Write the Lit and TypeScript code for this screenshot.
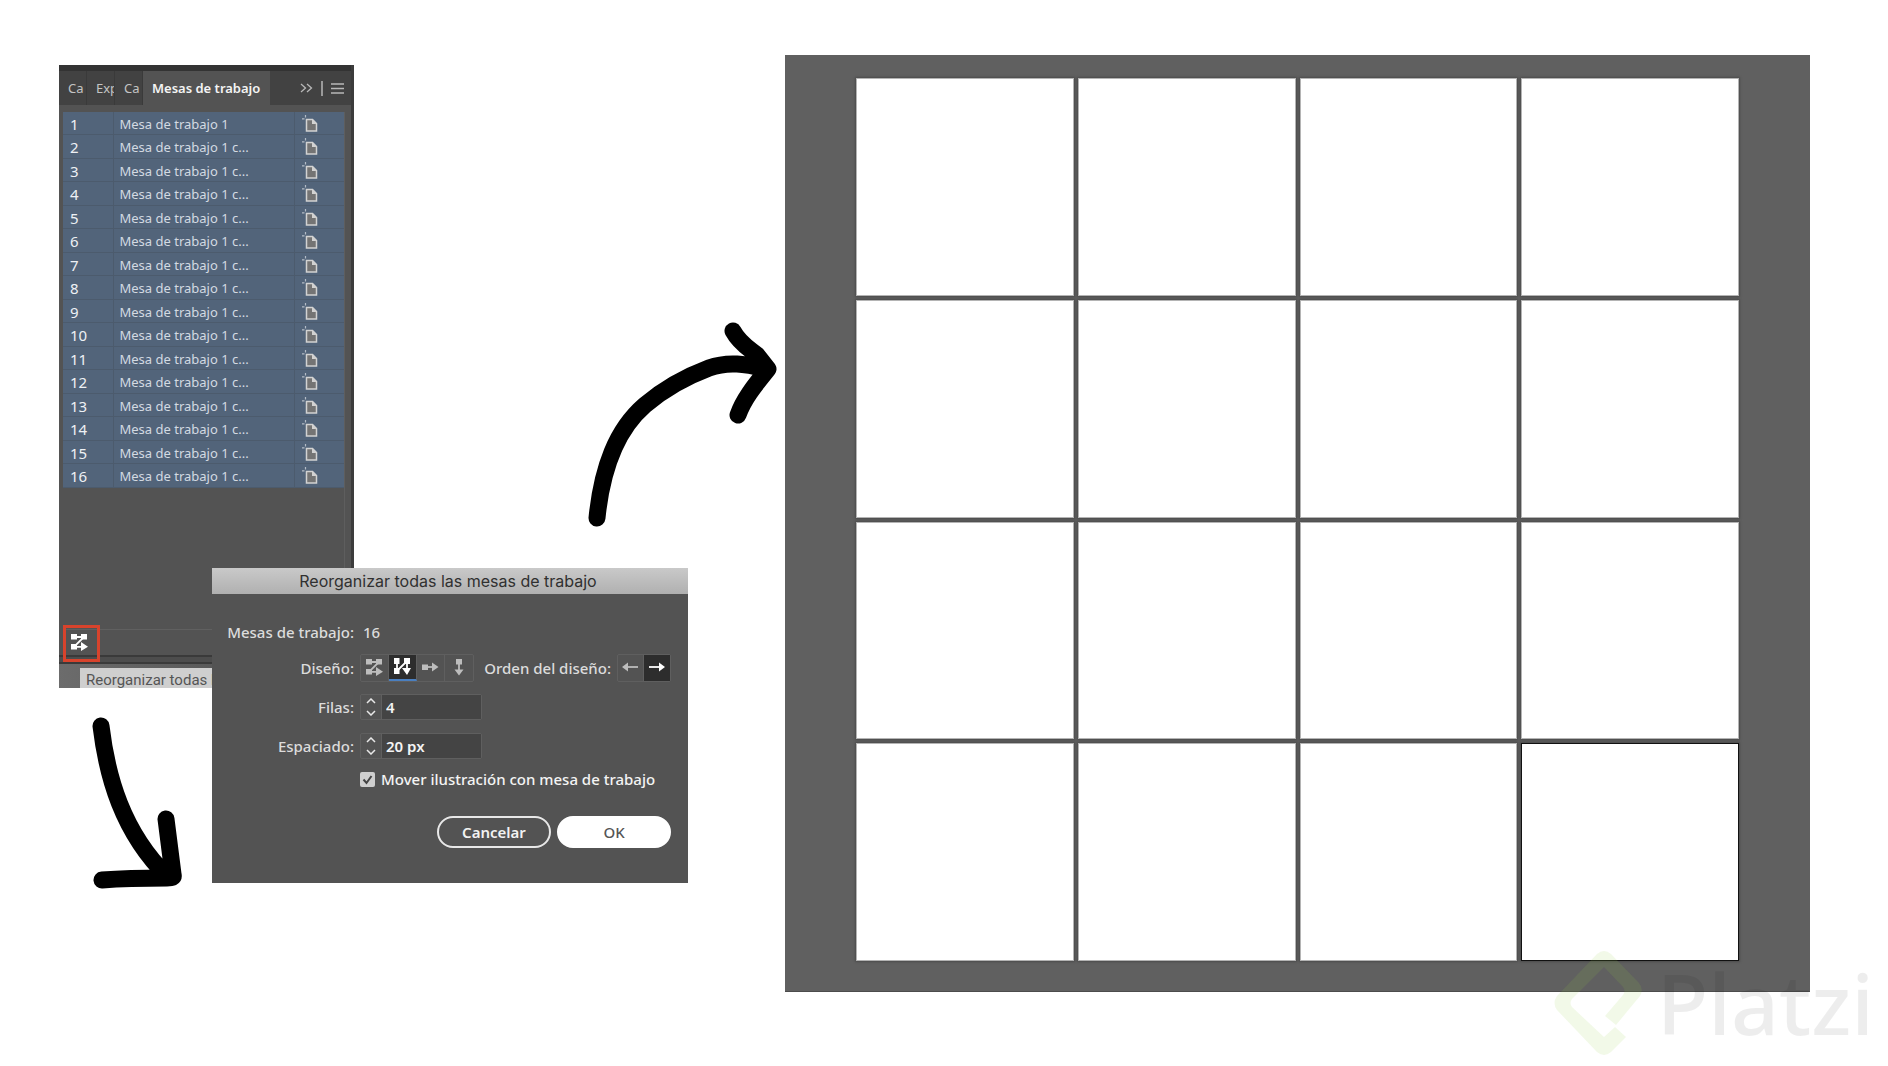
import { LitElement, html, css, svg } from "lit";
import { customElement, state } from "lit/decorators.js";
import { classMap } from "lit/directives/class-map.js";

const boards = Array.from({ length: 16 }, (_, i) => ({
  id: i + 1,
  name: i === 0 ? "Mesa de trabajo 1" : "Mesa de trabajo 1 c...",
}));

/* Layout glyphs, drawn in a 17 x 17 box */
const gridByRow = svg`
  <path d="M3 3h10L3 12.800h9" fill="none" stroke="currentColor" stroke-width="1.800"></path>
  <path d="M0 0h6v5.500H0zM10 0h6v5.500h-6zM0 10h6v5.500H0zM10 8l7 4.800-7 4.200z" fill="currentColor"></path>`;
const gridByColumn = svg`
  <path d="M3 3v10L13 3v9" fill="none" stroke="currentColor" stroke-width="1.800"></path>
  <path d="M0 0h5.500v6H0zM10 0h6v6h-6zM0 10h5.500v6H0zM8 10h9l-4 7z" fill="currentColor"></path>`;
const singleRow = svg`
  <path d="M3 8h9" stroke="currentColor" stroke-width="1.800"></path>
  <path d="M0 5.500h6v5.500H0zM10 3.500l6.500 4.500-6.500 4.500z" fill="currentColor"></path>`;
const singleColumn = svg`
  <path d="M8 3v9" stroke="currentColor" stroke-width="1.800"></path>
  <path d="M5 0h6v5.500H5zM3.500 10.500h9L8 16.500z" fill="currentColor"></path>`;
const arrowLeft = svg`
  <path d="M4 8h12" stroke="currentColor" stroke-width="1.800"></path>
  <path d="M6 3.500v9L0 8z" fill="currentColor"></path>`;
const arrowRight = svg`
  <path d="M0 8h12" stroke="currentColor" stroke-width="1.800"></path>
  <path d="M10 3.500v9L16 8z" fill="currentColor"></path>`;

const icon = (content: unknown) =>
  html`<svg class="icon" viewBox="0 0 17 17" width="17" height="17" aria-hidden="true">${content}</svg>`;

@customElement("artboards-panel")
class ArtboardsPanel extends LitElement {
  static styles = css`
    :host { display: block; background: #535353; color: #e2e2e2; font: 13px/16px "Noto Sans", sans-serif; border-right: 3px solid #3c3c3c; }
    * { box-sizing: border-box; }
    button { font: inherit; color: inherit; background: none; border: 0; padding: 0; margin: 0; }
    .tabs { display: flex; height: 40px; background: #424242; border-top: 6px solid #333; }
    .tab { width: 28px; padding-left: 9px; overflow: hidden; text-align: left; border-right: 1px solid #3a3a3a; color: #c4c4c4; }
    .tab.current { width: 127px; background: #535353; color: #f4f4f4; font-weight: 600; border: 0; white-space: nowrap; }
    .tools { flex: 1; display: flex; align-items: center; justify-content: flex-end; gap: 8px; padding-right: 7px; color: #b8b8b8; }
    .tools button { display: flex; }
    .list { margin: 7px 6px 0 4px; border-right: 1px solid #5e5e5e; min-height: 517px; }
    table { width: 100%; height: 376px; border-collapse: collapse; background: #52647a; table-layout: fixed; }
    td { padding: 1px 0 0; border-bottom: 1px solid #4c5b6d; color: #d3dae2; white-space: nowrap; }
    td + td { border-left: 1px solid #4c5b6d; padding-left: 6px; }
    .num { width: 50px; padding-left: 7px; font-size: 15px; color: #eef1f5; }
    .type { width: 50px; }
    td svg { display: block; }
    .foot { display: flex; height: 26px; margin: 0 6px 0 4px; border-top: 1px solid #606060; border-right: 1px solid #5e5e5e; }
    .rearrange { display: flex; align-items: center; justify-content: center; width: 37px; height: 37px; margin-top: -5px; border: 3px solid #d8432c; color: #fff; padding: 0 4px 2px 0; z-index: 1; }
    .grip { height: 9px; border: solid #3a3a3a; border-width: 2px 0; background: #4d4d4d; }
    .under { display: flex; height: 24px; background: linear-gradient(90deg, #6c6c6c, #484848); align-items: flex-end; }
    .tip { flex: 1; margin-left: 21px; padding-left: 6px; background: #cfcfcf; color: #555; font: 15px/24px Roboto, sans-serif; white-space: nowrap; overflow: hidden; height: 20px; }
  `;
  render() {
    return html`
      <div class="tabs">
        <button class="tab">Ca</button>
        <button class="tab">Exp</button>
        <button class="tab">Ca</button>
        <button class="tab current">Mesas de trabajo</button>
        <div class="tools">
          <button aria-label="Expandir">
            <svg width="13" height="10" viewBox="0 0 13 10" fill="none" stroke="currentColor" stroke-width="1.300"><path d="M1 1l4.500 4L1 9M7 1l4.500 4L7 9"></path></svg>
          </button>
          <svg width="2" height="15"><path d="M1 0v15" stroke="currentColor" stroke-width="1.500"></path></svg>
          <button aria-label="Menú">
            <svg width="13" height="11" viewBox="0 0 13 11" stroke="currentColor" stroke-width="1.400"><path d="M0 1h13M0 5.500h13M0 10h13"></path></svg>
          </button>
        </div>
      </div>
      <div class="list">
        <table>
          <tbody>
            ${boards.map(
              (b) => html`<tr>
                <td class="num">${b.id}</td>
                <td>${b.name}</td>
                <td class="type">
                  <svg width="20" height="18" viewBox="0 0 20 18" fill="none">
                    <path d="M5.500 4.500h6l4 4V16h-10z" fill="#747474" stroke="#d2d2d2" stroke-width="1.500"></path>
                    <path d="M11 4v5h4.500z" fill="#d2d2d2"></path>
                    <path d="M4.500 0v2.500M1 3.800h2.500" stroke="#b4bcc6" stroke-width="1.200"></path>
                  </svg>
                </td>
              </tr>`
            )}
          </tbody>
        </table>
      </div>
      <div class="foot"><button class="rearrange" aria-label="Reorganizar todas">${icon(gridByRow)}</button></div>
      <div class="grip"></div>
      <div class="under"><div class="tip">Reorganizar todas las mesas</div></div>
    `;
  }
}

@customElement("rearrange-dialog")
class RearrangeDialog extends LitElement {
  @state() layout = 1;
  @state() order = 1;
  @state() rows = 4;
  @state() spacing = 20;

  static styles = css`
    :host { display: block; background: #535353; color: #dcdcdc; font: 500 15px/20px "Noto Sans", sans-serif; }
    * { box-sizing: border-box; }
    button, input { font: inherit; color: inherit; margin: 0; }
    h1 { margin: 0; height: 26px; background: linear-gradient(#c9c9c9, #b0b0b0); color: #303030; font: 400 16px/26px Inter, sans-serif; text-align: center; padding-right: 4px; }
    form { padding: 22px 17px 35px 10px; display: flex; flex-direction: column; }
    .row { display: flex; align-items: center; gap: 6px; height: 39px; }
    .row.short { height: 32px; }
    .label { width: 132px; text-align: right; white-space: nowrap; }
    .value { padding-left: 3px; }
    .group { display: flex; border: 1px solid #5f5f5f; border-radius: 2px; height: 28px; }
    .group button { width: 28px; padding: 0; border: 0; border-right: 1px solid #5f5f5f; background: none; display: flex; align-items: center; justify-content: center; color: #bdbdbd; }
    .group button:last-child { border-right: 0; }
    .group button.on { background: #2d2d2d; color: #fff; }
    .group.layouts button.on { border-bottom: 2px solid #4a7fc0; }
    .orderlabel { margin: 0 0 0 auto; white-space: nowrap; }
    .order button { width: 26px; }
    .stepper { display: flex; border: 1px solid #5f5f5f; border-radius: 2px; height: 26px; width: 122px; }
    .arrows { display: flex; flex-direction: column; width: 21px; border-right: 1px solid #5f5f5f; }
    .arrows button { flex: 1; border: 0; padding: 0; background: none; display: flex; align-items: center; justify-content: center; color: #e8e8e8; }
    .stepper input { flex: 1; min-width: 0; border: 0; background: #444; color: #f4f4f4; font-weight: 600; padding: 0 4px; }
    .check { display: flex; align-items: center; gap: 6px; margin-left: 138px; height: 28px; color: #f4f4f4; white-space: nowrap; }
    .check input { appearance: none; width: 15px; height: 15px; border-radius: 2px; background: #cfcfcf url('data:image/svg+xml,<svg xmlns="http://www.w3.org/2000/svg" viewBox="0 0 15 15"><path d="M3.500 7.500l3 3.500 5-7" fill="none" stroke="%23444" stroke-width="2"/></svg>'); }
    .actions { display: flex; justify-content: flex-end; gap: 6px; margin-top: 23px; }
    .actions button { width: 114px; height: 32px; border-radius: 16px; border: 2px solid #e8e8e8; background: none; color: #f2f2f2; font-weight: 600; padding: 0; }
    .actions button.ok { background: #fff; border-color: #fff; color: #555; font-weight: 500; }
  `;

  private stepper(id: string, text: string, label: string, step: (d: number) => void) {
    const up = svg`<path d="M1 5l4-4 4 4"></path>`;
    const down = svg`<path d="M1 1l4 4 4-4"></path>`;
    const chevron = (p: unknown) =>
      html`<svg width="10" height="6" viewBox="0 0 10 6" fill="none" stroke="currentColor" stroke-width="1.500">${p}</svg>`;
    return html`
      <label class="label" for=${id}>${label}</label>
      <div class="stepper">
        <div class="arrows">
          <button type="button" aria-label="Aumentar" @click=${() => step(1)}>${chevron(up)}</button>
          <button type="button" aria-label="Reducir" @click=${() => step(-1)}>${chevron(down)}</button>
        </div>
        <input id=${id} type="text" .value=${text} />
      </div>`;
  }

  render() {
    const layouts = [
      { name: "Cuadrícula por fila", glyph: gridByRow },
      { name: "Cuadrícula por columna", glyph: gridByColumn },
      { name: "Organizar por fila", glyph: singleRow },
      { name: "Organizar por columna", glyph: singleColumn },
    ];
    const orders = [
      { name: "Derecha a izquierda", glyph: arrowLeft },
      { name: "Izquierda a derecha", glyph: arrowRight },
    ];
    return html`
      <h1>Reorganizar todas las mesas de trabajo</h1>
      <form @submit=${(e: Event) => e.preventDefault()}>
        <div class="row short">
          <span class="label">Mesas de trabajo:</span><span class="value">16</span>
        </div>
        <div class="row">
          <span class="label">Diseño:</span>
          <div class="group layouts">
            ${layouts.map(
              (l, i) => html`<button type="button" aria-label=${l.name} class=${classMap({ on: i === this.layout })} @click=${() => (this.layout = i)}>${icon(l.glyph)}</button>`
            )}
          </div>
          <span class="orderlabel">Orden del diseño:</span>
          <div class="group order">
            ${orders.map(
              (o, i) => html`<button type="button" aria-label=${o.name} class=${classMap({ on: i === this.order })} @click=${() => (this.order = i)}>${icon(o.glyph)}</button>`
            )}
          </div>
        </div>
        <div class="row">${this.stepper("rows", String(this.rows), "Filas:", (d) => (this.rows += d))}</div>
        <div class="row">${this.stepper("spacing", `${this.spacing} px`, "Espaciado:", (d) => (this.spacing += d))}</div>
        <label class="check"><input type="checkbox" checked />Mover ilustración con mesa de trabajo</label>
        <div class="actions">
          <button type="button">Cancelar</button>
          <button type="submit" class="ok">OK</button>
        </div>
      </form>
    `;
  }
}

@customElement("app-root")
class AppRoot extends LitElement {
  static styles = css`
    :host { display: block; background: #fff; }
    * { box-sizing: border-box; }
    .page { position: relative; display: flex; align-items: flex-start; gap: 97px; min-height: 100vh; padding: 55px 78px 74px 59px; overflow: hidden; }
    .steps { position: relative; flex: 0 0 629px; padding-top: 10px; }
    artboards-panel { width: 295px; }
    rearrange-dialog { position: absolute; left: 153px; top: 513px; width: 476px; }
    .stroke { position: absolute; fill: none; stroke: #000; stroke-width: 17; stroke-linecap: round; stroke-linejoin: round; }
    .down { left: 21px; top: 645px; }
    .across { left: 511px; top: 255px; }
    .canvas { flex: 1; display: grid; grid-template-columns: repeat(4, 1fr); gap: 4px; padding: 23px 71px 30px; background: #606060; border-bottom: 1px solid #4c4c4c; }
    .board { aspect-ratio: 1; background: #fff; border: 1px solid #b4b4b4; box-shadow: 0 0 2px 1px #4c4c4c; }
    .board.active { border-color: #111; }
    .brand { position: absolute; right: 14px; bottom: 10px; display: flex; align-items: center; gap: 14px; font: 500 84px/96px "Noto Sans", sans-serif; color: rgba(0, 0, 0, 0.07); }
  `;
  render() {
    return html`
      <main class="page">
        <section class="steps">
          <artboards-panel></artboards-panel>
          <svg class="stroke down" width="130" height="200" viewBox="0 0 130 200">
            <path d="M21 26C27 76 42 132 88 177M86 119L93 174C94 178 92 178 87 178C62 178 48 178 22 180"></path>
          </svg>
          <svg class="stroke across" width="220" height="230" viewBox="0 0 220 230">
            <path d="M27 208C32 158 46 120 75 95C95 78 115 67 139 58C158 51 175 54 198 59M163 21C170 34 180 39 187 45L198 59C186 74 174 88 168 105"></path>
          </svg>
          <rearrange-dialog></rearrange-dialog>
        </section>
        <section class="canvas">
          ${boards.map((b) => html`<div class=${classMap({ board: true, active: b.id === 16 })}></div>`)}
        </section>
        <div class="brand">
          <svg width="90" height="106" viewBox="0 0 90 106" fill="#98ca3f" fill-opacity="0.120">
            <path d="M44 4Q51 -2 58 4L86 33Q91 39 87 46L63 75L52 66L70 45Q73 41 70 37L51 17L19 49Q16 53 19 57L51 87L62 77L73 87L58 102Q51 108 44 102L4 60Q-1 53 4 46Z"></path>
          </svg>
          <span>Platzi</span>
        </div>
      </main>
    `;
  }
}
